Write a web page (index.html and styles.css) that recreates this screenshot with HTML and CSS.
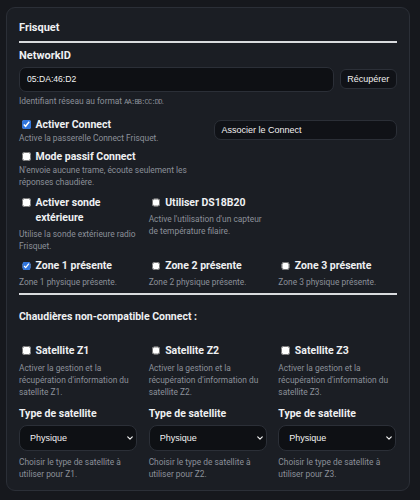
FILE: index.html
```html
<!DOCTYPE html>
<html lang="fr">
<head>
<meta charset="utf-8">
<title>Frisquet</title>
<link rel="stylesheet" href="styles.css">
</head>
<body>
<main class="page">
  <section class="card">
    <h2 class="card-title">Frisquet</h2>
    <hr class="rule">

    <label class="field-label" for="network-id">NetworkID</label>
    <div class="input-row">
      <input id="network-id" class="text-input" type="text" value="05:DA:46:D2">
      <button class="btn" type="button">Récupérer</button>
    </div>
    <p class="hint">Identifiant réseau au format <code>AA:BB:CC:DD</code>.</p>

    <div class="grid-2">
      <div class="col">
        <label class="check"><input type="checkbox" checked><span>Activer Connect</span></label>
        <p class="desc">Active la passerelle Connect Frisquet.</p>
        <label class="check check-next"><input type="checkbox"><span>Mode passif Connect</span></label>
        <p class="desc">N'envoie aucune trame, écoute seulement les réponses chaudière.</p>
      </div>
      <div class="col">
        <button class="btn btn-wide" type="button">Associer le Connect</button>
      </div>
    </div>

    <div class="grid-3 row-sonde">
      <div class="col">
        <label class="check"><input type="checkbox"><span>Activer sonde extérieure</span></label>
        <p class="desc desc-gap">Utilise la sonde extérieure radio Frisquet.</p>
      </div>
      <div class="col">
        <label class="check"><input type="checkbox"><span>Utiliser DS18B20</span></label>
        <p class="desc desc-gap">Active l'utilisation d'un capteur de température filaire.</p>
      </div>
    </div>

    <div class="grid-3 row-zones">
      <div class="col">
        <label class="check"><input type="checkbox" checked><span>Zone 1 présente</span></label>
        <p class="desc desc-gap">Zone 1 physique présente.</p>
      </div>
      <div class="col">
        <label class="check"><input type="checkbox"><span>Zone 2 présente</span></label>
        <p class="desc desc-gap">Zone 2 physique présente.</p>
      </div>
      <div class="col">
        <label class="check"><input type="checkbox"><span>Zone 3 présente</span></label>
        <p class="desc desc-gap">Zone 3 physique présente.</p>
      </div>
    </div>

    <hr class="rule rule-mid">

    <h3 class="section-title">Chaudières non-compatible Connect :</h3>

    <div class="grid-3 row-sat">
      <div class="col">
        <label class="check"><input type="checkbox"><span>Satellite Z1</span></label>
        <p class="desc desc-sat">Activer la gestion et la récupération d'information du satellite Z1.</p>
        <label class="field-label sat-label" for="sat-z1">Type de satellite</label>
        <div class="select-wrap">
          <select id="sat-z1" class="select"><option>Physique</option><option>Virtuel</option></select>
          <svg class="chevron" viewBox="0 0 8 5" width="6" height="4"><path d="M1 1l3 3 3-3" fill="none" stroke="#f2f2f2" stroke-width="1.6" stroke-linecap="round" stroke-linejoin="round"/></svg>
        </div>
        <p class="desc desc-select">Choisir le type de satellite à utiliser pour Z1.</p>
      </div>
      <div class="col">
        <label class="check"><input type="checkbox"><span>Satellite Z2</span></label>
        <p class="desc desc-sat">Activer la gestion et la récupération d'information du satellite Z2.</p>
        <label class="field-label sat-label" for="sat-z2">Type de satellite</label>
        <div class="select-wrap">
          <select id="sat-z2" class="select"><option>Physique</option><option>Virtuel</option></select>
          <svg class="chevron" viewBox="0 0 8 5" width="6" height="4"><path d="M1 1l3 3 3-3" fill="none" stroke="#f2f2f2" stroke-width="1.6" stroke-linecap="round" stroke-linejoin="round"/></svg>
        </div>
        <p class="desc desc-select">Choisir le type de satellite à utiliser pour Z2.</p>
      </div>
      <div class="col">
        <label class="check"><input type="checkbox"><span>Satellite Z3</span></label>
        <p class="desc desc-sat">Activer la gestion et la récupération d'information du satellite Z3.</p>
        <label class="field-label sat-label" for="sat-z3">Type de satellite</label>
        <div class="select-wrap">
          <select id="sat-z3" class="select"><option>Physique</option><option>Virtuel</option></select>
          <svg class="chevron" viewBox="0 0 8 5" width="6" height="4"><path d="M1 1l3 3 3-3" fill="none" stroke="#f2f2f2" stroke-width="1.6" stroke-linecap="round" stroke-linejoin="round"/></svg>
        </div>
        <p class="desc desc-select">Choisir le type de satellite à utiliser pour Z3.</p>
      </div>
    </div>
  </section>

  <div class="actions">
    <button class="action action-primary" type="button" aria-label="Enregistrer"></button>
    <button class="action" type="button" aria-label="Recharger"></button>
    <button class="action action-md" type="button" aria-label="Redémarrer"></button>
    <button class="action action-lg" type="button" aria-label="Réinitialiser"></button>
  </div>
</main>
</body>
</html>
```

FILE: styles.css
```css
* {
  box-sizing: border-box;
}

html,
body {
  margin: 0;
  height: 100%;
  overflow: hidden;
}

body {
  background: #16181d;
  color: #eef0f2;
  font-family: Roboto, "Liberation Sans", sans-serif;
}

.page {
  padding: 7px 0 0 6px;
}

/* settings card */
.card {
  width: 403.5px;
  background: #1b1e24;
  border: 1px solid #2b2f37;
  border-radius: 9px;
  padding: 12.4px 12px 10.5px;
}

.card-title {
  margin: 0;
  font-size: 11px;
  line-height: 15px;
  font-weight: 700;
}

.rule {
  border: 0;
  height: 2px;
  margin: 5.3px 0 0;
  background: #d9dbde;
}

.rule-mid {
  margin-top: 5px;
}

.field-label {
  display: block;
  margin-top: 5px;
  font-size: 11px;
  line-height: 15px;
  font-weight: 700;
}

.input-row {
  display: flex;
  align-items: center;
  gap: 6px;
  margin-top: 4px;
}

.text-input {
  flex: 1;
  min-width: 0;
  height: 25px;
  padding: 0 7px;
  background: #0e1014;
  border: 1px solid #2b2f37;
  border-radius: 7px;
  color: #f2f2f2;
  font: 8.6px "Liberation Sans", Arial, sans-serif;
  outline: none;
}

.btn {
  height: 19.4px;
  padding: 0 6.3px;
  background: #101217;
  border: 1px solid #2b2f37;
  border-radius: 6px;
  color: #f0f0f0;
  font: 9px "Liberation Sans", Arial, sans-serif;
}

.btn-wide {
  display: block;
  width: 100%;
  height: 20px;
  margin-top: 3.4px;
  padding: 0 7px;
  border-radius: 7px;
  text-align: left;
}

.hint {
  margin: 3.1px 0 0;
  font-size: 8.4px;
  line-height: 12px;
  color: #8b9099;
}

.hint code {
  font-family: "Liberation Mono", monospace;
  font-size: 7px;
  letter-spacing: -0.8px;
}

/* option grids */
.grid-2 {
  display: grid;
  grid-template-columns: 1fr 1fr;
  column-gap: 11.5px;
  margin-top: 9.1px;
}

.grid-3 {
  display: grid;
  grid-template-columns: repeat(3, 1fr);
  column-gap: 11.5px;
}

.row-sonde {
  margin-top: 6.8px;
}

.row-zones {
  margin-top: 6.5px;
}

.row-sat {
  margin-top: 18.8px;
}

.check {
  display: flex;
  align-items: flex-start;
  font-size: 10.5px;
  line-height: 15px;
  font-weight: 700;
  color: #eef0f2;
}

.check input {
  flex: none;
  width: 8.5px;
  height: 8.5px;
  margin: 3.2px 5px 0 3px;
  accent-color: #2f74dc;
}

.check-next {
  margin-top: 5.2px;
}

.desc {
  margin: 0;
  font-size: 8.4px;
  line-height: 12px;
  color: #8b9099;
}

.desc-gap {
  margin-top: 3px;
}

.desc-sat {
  margin-top: 3.9px;
}

.section-title {
  margin: 14.1px 0 0;
  font-size: 10.5px;
  line-height: 15px;
  font-weight: 700;
}

.sat-label {
  margin-top: 8.3px;
  font-size: 10.5px;
}

.select-wrap {
  position: relative;
  margin-top: 3.6px;
}

.select {
  display: block;
  width: 100%;
  height: 26px;
  padding: 0 14px 0 10px;
  appearance: none;
  -webkit-appearance: none;
  background: #0e1014;
  border: 1px solid #2b2f37;
  border-radius: 8px;
  color: #f2f2f2;
  font: 9px "Liberation Sans", Arial, sans-serif;
  outline: none;
}

.chevron {
  position: absolute;
  right: 4px;
  top: 11px;
  pointer-events: none;
}

.desc-select {
  margin-top: 4.5px;
}

/* action bar under the card */
.actions {
  display: flex;
  gap: 16px;
  margin: 9px 0 0 5px;
}

.action {
  width: 59px;
  height: 28px;
  background: #1b1e24;
  border: 1px solid #2e323a;
  border-radius: 6px;
}

.action-primary {
  background: #2563c9;
  border-color: #4b88d0;
}

.action-md {
  width: 66px;
}

.action-lg {
  width: 70px;
}
```
